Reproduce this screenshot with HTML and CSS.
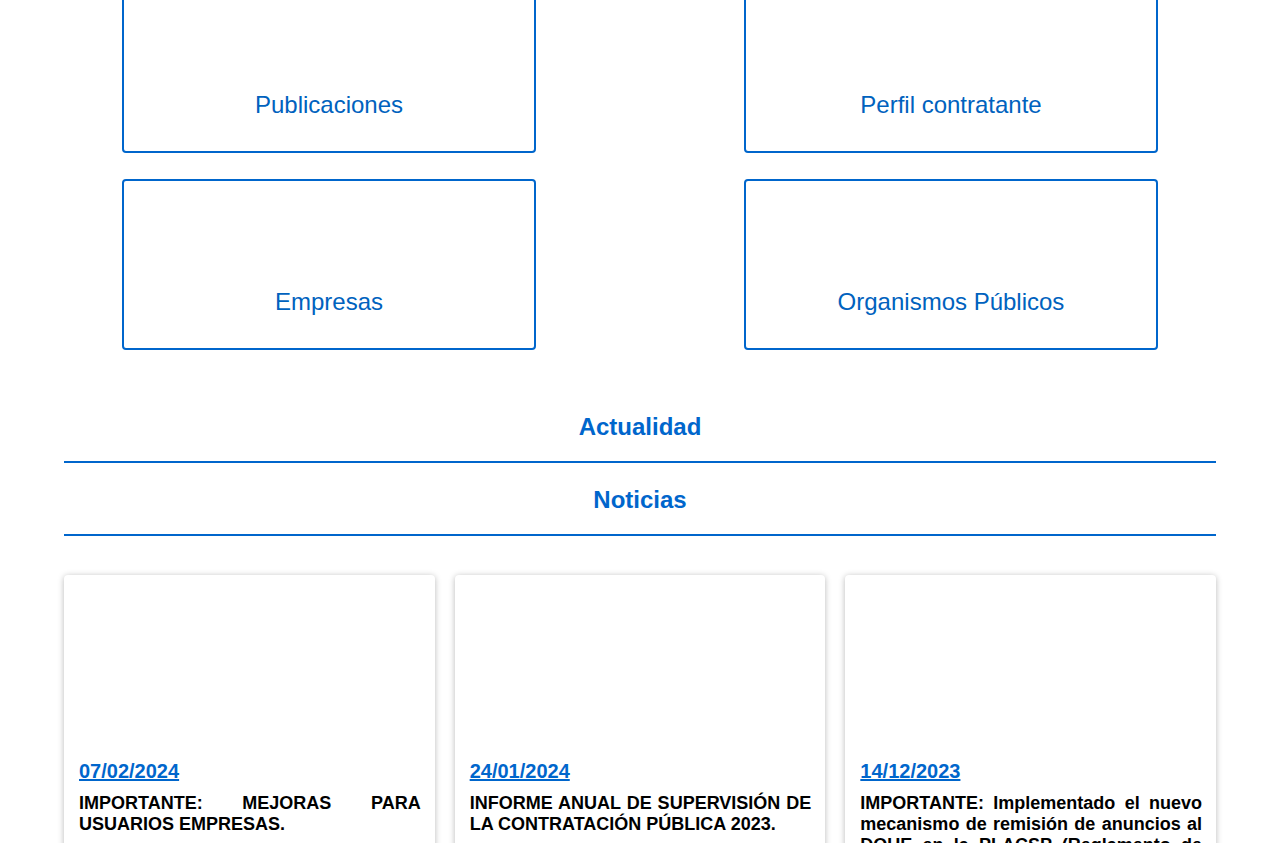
FILE: index.html
```html
<!DOCTYPE html>
<html lang="es">

<head>
    <meta charset="UTF-8">
    <meta name="viewport" content="width=device-width, initial-scale=1.0">
    <title>Plataforma de Contratación</title>
    <link rel="stylesheet" href="styles.css">
</head>

<body>
    <div class="main">
        <div class="accesos">
            <a class="acceso" href="#">Publicaciones</a>
            <a class="acceso" href="#">Perfil contratante</a>
            <a class="acceso" href="#">Empresas</a>
            <a class="acceso" href="#">Organismos Públicos</a>
        </div>

        <h2 class="seccion">Actualidad</h2>
        <h2 class="seccion sub">Noticias</h2>

        <div class="noticias">
            <div class="noticia">
                <div class="foto"></div>
                <div class="cuerpo">
                    <a class="fecha" href="#">07/02/2024</a>
                    <p class="titular">IMPORTANTE: MEJORAS PARA USUARIOS EMPRESAS.</p>
                </div>
            </div>
            <div class="noticia">
                <div class="foto"></div>
                <div class="cuerpo">
                    <a class="fecha" href="#">24/01/2024</a>
                    <p class="titular">INFORME ANUAL DE SUPERVISIÓN DE LA CONTRATACIÓN PÚBLICA 2023.</p>
                </div>
            </div>
            <div class="noticia">
                <div class="foto"></div>
                <div class="cuerpo">
                    <a class="fecha" href="#">14/12/2023</a>
                    <p class="titular">IMPORTANTE: Implementado el nuevo mecanismo de remisión de anuncios al DOUE en la PLACSP (Reglamento de Ejecución (UE) 2019/1780).</p>
                </div>
            </div>
        </div>
    </div>
</body>

</html>
```

FILE: styles.css
```css
body {
    margin: 0;
    background: #ffffff;
    font-family: "Liberation Sans", Arial, sans-serif;
    color: #000000;
}

.main {
    width: 1152px;
    margin: 0 auto;
}

/* accesos directos */
.accesos {
    display: grid;
    grid-template-columns: 414px 414px;
    justify-content: center;
    column-gap: 208px;
    row-gap: 26px;
    margin-top: -18px;
}

.acceso {
    box-sizing: border-box;
    height: 171px;
    display: flex;
    flex-direction: column;
    justify-content: flex-end;
    align-items: center;
    padding-bottom: 32px;
    border: 2px solid #0066cc;
    border-radius: 4px;
    color: #0062be;
    font-size: 24px;
    text-decoration: none;
}

/* titulos */
.seccion {
    margin: 0;
    padding: 23px 0 20px;
    text-align: center;
    font-size: 24px;
    font-weight: bold;
    color: #0066cc;
    border-bottom: 2px solid #0066cc;
}

.seccion:first-of-type {
    margin-top: 40px;
}

/* noticias */
.noticias {
    display: grid;
    grid-template-columns: repeat(3, 1fr);
    gap: 20px;
    margin-top: 39px;
}

.noticia {
    background: #ffffff;
    border-radius: 4px;
    box-shadow: 0 1px 6px rgba(0, 0, 0, 0.28);
    overflow: hidden;
}

.foto {
    height: 185px;
}

.cuerpo {
    padding: 0 14px 20px 15px;
}

.fecha {
    display: block;
    font-size: 20px;
    font-weight: bold;
    color: #0066cc;
    text-decoration: underline;
}

.titular {
    margin: 10px 0 0;
    font-size: 18px;
    line-height: 21px;
    font-weight: bold;
    text-align: justify;
}
```
